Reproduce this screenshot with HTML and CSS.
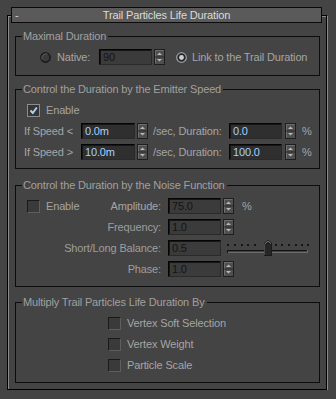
FILE: index.html
```html
<!DOCTYPE html>
<html lang="en">
<head>
  <meta charset="UTF-8">
  <title>Trail Particles Life Duration</title>
  <link rel="stylesheet" href="styles.css">
</head>
<body>
<svg class="defs" width="0" height="0">
  <symbol id="spin" viewBox="0 0 11 16">
    <rect x="0.5" y="0.5" width="10" height="15" fill="#4f4f4f" stroke="#1e1e1e"/>
    <path d="M1.5 1.5 H9.5 M1.5 1.5 V14.5" stroke="#6e6e6e" fill="none"/>
    <path d="M1 8 H10" stroke="#2a2a2a"/>
    <polygon points="3,6 8,6 5.5,3.5" fill="#b8b8b8"/>
    <polygon points="3,10 8,10 5.5,12.5" fill="#b8b8b8"/>
  </symbol>
</svg>

<div class="title-bar"><span class="minus">-</span>Trail Particles Life Duration</div>

<div class="frame">

  <!-- Maximal Duration -->
  <div class="group g1">
    <div class="group-title">Maximal Duration</div>
    <div class="row row-max">
      <svg class="radio" width="11" height="11" viewBox="0 0 11 11">
        <circle cx="5.5" cy="5.5" r="4.6" fill="#3b3b3b" stroke="#1a1a1a" stroke-width="1.6"/>
        <path d="M2 7.5 A4.3 4.3 0 0 1 7.5 2" stroke="#5c5c5c" fill="none"/>
      </svg>
      <span class="lbl w-native">Native:</span>
      <span class="field off w53">90</span>
      <svg class="spin"><use href="#spin"/></svg>
      <svg class="radio r2" width="11" height="11" viewBox="0 0 11 11">
        <circle cx="5.5" cy="5.5" r="4.8" fill="#262626" stroke="#9c9c9c" stroke-width="1.3"/>
        <circle cx="5.5" cy="5.5" r="2.4" fill="#c6d2de"/>
      </svg>
      <span class="lbl ml5">Link to the Trail Duration</span>
    </div>
  </div>

  <!-- Emitter speed -->
  <div class="group g2">
    <div class="group-title">Control the Duration by the Emitter Speed</div>
    <div class="row pl11">
      <span class="check on">
        <svg width="11" height="11" viewBox="0 0 11 11"><path d="M2.5 5.5 L4.8 8 L8.8 2.5" stroke="#a9d1f5" stroke-width="2" fill="none"/></svg>
      </span>
      <span class="lbl ml6">Enable</span>
    </div>
    <div class="row pl8">
      <span class="lbl w-speed">If Speed &lt;</span>
      <span class="field w54">0.0m</span>
      <svg class="spin"><use href="#spin"/></svg>
      <span class="lbl w-sec">/sec, Duration:</span>
      <span class="field w53">0.0</span>
      <svg class="spin ml3"><use href="#spin"/></svg>
      <span class="lbl ml6">%</span>
    </div>
    <div class="row pl8">
      <span class="lbl w-speed">If Speed &gt;</span>
      <span class="field w54">10.0m</span>
      <svg class="spin"><use href="#spin"/></svg>
      <span class="lbl w-sec">/sec, Duration:</span>
      <span class="field w53">100.0</span>
      <svg class="spin ml3"><use href="#spin"/></svg>
      <span class="lbl ml6">%</span>
    </div>
  </div>

  <!-- Noise function -->
  <div class="group g3">
    <div class="group-title">Control the Duration by the Noise Function</div>
    <div class="row pl11">
      <span class="lbl-box split">
        <span class="inline"><span class="check"></span><span class="lbl ml6">Enable</span></span>
        <span class="lbl">Amplitude:</span>
      </span>
      <span class="field off w53">75.0</span>
      <svg class="spin"><use href="#spin"/></svg>
      <span class="lbl ml8">%</span>
    </div>
    <div class="row pl11">
      <span class="lbl-box">Frequency:</span>
      <span class="field off w53">1.0</span>
      <svg class="spin"><use href="#spin"/></svg>
    </div>
    <div class="row pl11">
      <span class="lbl-box">Short/Long Balance:</span>
      <span class="field off w53">0.5</span>
      <svg class="slider" width="82" height="16" viewBox="0 0 82 16">
        <g fill="#161616">
          <rect x="0" y="4" width="2" height="2"/>
          <rect x="7" y="4" width="2" height="2"/>
          <rect x="14" y="4" width="2" height="2"/>
          <rect x="20" y="4" width="2" height="2"/>
          <rect x="27" y="4" width="2" height="2"/>
          <rect x="48" y="4" width="2" height="2"/>
          <rect x="54" y="4" width="2" height="2"/>
          <rect x="61" y="4" width="2" height="2"/>
          <rect x="68" y="4" width="2" height="2"/>
          <rect x="74" y="4" width="2" height="2"/>
          <rect x="80" y="4" width="2" height="2"/>
        </g>
        <rect x="0" y="10" width="81" height="1" fill="#111"/>
        <rect x="0" y="12" width="81" height="1" fill="#6a6a6a"/>
        <rect x="80" y="10" width="1" height="3" fill="#6a6a6a"/>
        <rect x="0" y="10" width="1" height="3" fill="#111"/>
        <polygon points="37,16 37,3 41,0 45,3 45,16" fill="#1a1a1a"/>
        <path d="M38 15 V3.5 L41 1.3 L44 3.5" stroke="#7c7c7c" fill="none"/>
        <rect x="38" y="4" width="6" height="11" fill="#262626"/>
      </svg>
    </div>
    <div class="row pl11">
      <span class="lbl-box">Phase:</span>
      <span class="field off w53">1.0</span>
      <svg class="spin"><use href="#spin"/></svg>
    </div>
  </div>

  <!-- Multiply -->
  <div class="group g4">
    <div class="group-title">Multiply Trail Particles Life Duration By</div>
    <div class="row pl92"><span class="check"></span><span class="lbl ml6">Vertex Soft Selection</span></div>
    <div class="row pl92"><span class="check"></span><span class="lbl ml6">Vertex Weight</span></div>
    <div class="row pl92"><span class="check"></span><span class="lbl ml6">Particle Scale</span></div>
  </div>

</div>
</body>
</html>
```

FILE: styles.css
```css
* {
  margin: 0;
  padding: 0;
  box-sizing: border-box;
}

body {
  background-color: #444444;
  font-family: "Liberation Sans", Arial, sans-serif;
  font-size: 11px;
  letter-spacing: -0.15px;
  color: #a2a2a2;
  padding-top: 7px;
}

.defs {
  display: none;
}

.title-bar {
  position: relative;
  z-index: 1;
  margin-left: 11px;
  width: 311px;
  height: 16px;
  line-height: 14px;
  border: 1px solid #0a0a0a;
  background-color: #5a5a5a;
  color: #dadada;
  text-align: center;
}

.title-bar .minus {
  position: absolute;
  left: 3px;
  top: 0;
  color: #d0d0d0;
}

.frame {
  margin: -8px 0 0 7px;
  width: 320px;
  padding: 0 6px 6px 7px;
  border: 1px solid #000;
  box-shadow: 1px 1px 0 #8a8a8a, inset 1px 1px 0 #8a8a8a;
}

.group {
  border: 1px solid #0c0c0c;
}

.g1 {
  margin-top: 20px;
  padding-bottom: 10px;
}

.g2 {
  margin-top: 13px;
  padding-bottom: 8px;
}

.g3 {
  margin-top: 16px;
  padding-bottom: 9px;
}

.g4 {
  margin-top: 15px;
  padding-bottom: 9px;
}

.group-title {
  width: fit-content;
  margin: -7px 0 0 6px;
  padding: 0 2px 0 1px;
  line-height: 13px;
  background-color: #444444;
  color: #a0a0a0;
}

.row {
  display: flex;
  align-items: center;
  height: 16px;
  line-height: 16px;
  margin-top: 5px;
  white-space: nowrap;
}

.group-title + .row {
  margin-top: 6px;
}

.row-max {
  padding-left: 24px;
}

.pl8 { padding-left: 8px; }
.pl11 { padding-left: 11px; }
.pl92 { padding-left: 92px; }
.ml3 { margin-left: 3px; }
.ml5 { margin-left: 5px; }
.ml6 { margin-left: 6px; }
.ml8 { margin-left: 8px; }

.lbl {
  color: #a4a4a4;
}

.w-native {
  width: 42px;
  margin-left: 6px;
}

.w-speed {
  width: 57px;
}

.w-sec {
  width: 76px;
  margin-left: 5px;
}

.lbl-box {
  width: 134px;
  text-align: right;
  color: #9e9e9e;
}

.lbl-box.split {
  display: flex;
  justify-content: space-between;
  align-items: center;
}

.inline {
  display: flex;
  align-items: center;
}

.field {
  display: block;
  height: 16px;
  line-height: 14px;
  padding-left: 3px;
  border: 1px solid #050505;
  border-right-color: #2a2a2a;
  border-bottom-color: #2a2a2a;
  box-shadow: inset 1px 1px 0 #161616;
  background-color: #2f2f2f;
  color: #a6d0ff;
}

.field.off {
  background-color: #3b3b3b;
  color: #141414;
}

.lbl-box + .field {
  margin-left: 7px;
}

.w53 { width: 53px; }
.w54 { width: 54px; }

.spin {
  display: block;
  width: 11px;
  height: 16px;
  margin-left: 2px;
}

.spin.ml3 {
  margin-left: 3px;
}

.radio {
  display: block;
  flex: none;
}

.radio.r2 {
  margin-left: 11px;
}

.check {
  display: flex;
  align-items: center;
  justify-content: center;
  flex: none;
  width: 13px;
  height: 13px;
  border: 1px solid #1a1a1a;
  border-right-color: #5e5e5e;
  border-bottom-color: #5e5e5e;
  background-color: #3a3a3a;
}

.check.on {
  border: 1px solid #8c8c8c;
  background-color: #353535;
}

.check svg {
  display: block;
}

.slider {
  display: block;
  margin-left: 6px;
}
```
